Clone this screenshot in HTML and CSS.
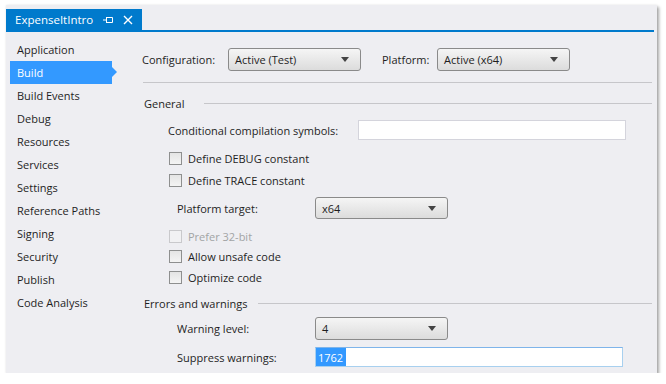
FILE: index.html
```html
<!DOCTYPE html>
<html>
<head>
<meta charset="utf-8">
<link rel="stylesheet" href="styles.css">
</head>
<body>
<div class="frame">
  <div class="tabbar">
    <div class="tab">
      <span class="tab-title">ExpenseItIntro</span>
      <svg class="pin" width="10" height="8" viewBox="0 0 10 8"><path d="M0 4H3M3.5 1V7M3.5 1.5H9.5V6.5H3.5" fill="none" stroke="#fff" stroke-width="1"/></svg>
      <svg class="close" width="10" height="10" viewBox="0 0 10 10"><path d="M1 1L9 9M9 1L1 9" stroke="#fff" stroke-width="1.4"/></svg>
    </div>
  </div>
  <div class="body">
    <ul class="nav">
      <li class="nav-item">Application</li>
      <li class="nav-item active">Build</li>
      <li class="nav-item">Build Events</li>
      <li class="nav-item">Debug</li>
      <li class="nav-item">Resources</li>
      <li class="nav-item">Services</li>
      <li class="nav-item">Settings</li>
      <li class="nav-item">Reference Paths</li>
      <li class="nav-item">Signing</li>
      <li class="nav-item">Security</li>
      <li class="nav-item">Publish</li>
      <li class="nav-item">Code Analysis</li>
    </ul>
    <div class="main">
      <div class="config-row">
        <span class="lbl lbl-config">Configuration:</span>
        <div class="combo combo-config"><span>Active (Test)</span><i class="arrow"></i></div>
        <span class="lbl lbl-platform">Platform:</span>
        <div class="combo combo-config"><span>Active (x64)</span><i class="arrow"></i></div>
      </div>
      <div class="sep"></div>
      <div class="section-head"><span>General</span><i class="line"></i></div>
      <div class="row row-cond">
        <span class="lbl lbl-cond">Conditional compilation symbols:</span>
        <div class="textbox tb-cond"></div>
      </div>
      <div class="check check-debug"><i class="box"></i><span>Define DEBUG constant</span></div>
      <div class="check check-trace"><i class="box"></i><span>Define TRACE constant</span></div>
      <div class="row row-target">
        <span class="lbl lbl-sub">Platform target:</span>
        <div class="combo combo-sub"><span>x64</span><i class="arrow"></i></div>
      </div>
      <div class="check check-prefer disabled"><i class="box"></i><span>Prefer 32-bit</span></div>
      <div class="check check-unsafe"><i class="box"></i><span>Allow unsafe code</span></div>
      <div class="check check-opt"><i class="box"></i><span>Optimize code</span></div>
      <div class="section-head section-errors"><span>Errors and warnings</span><i class="line"></i></div>
      <div class="row row-warn">
        <span class="lbl lbl-sub">Warning level:</span>
        <div class="combo combo-sub"><span>4</span><i class="arrow"></i></div>
      </div>
      <div class="row row-suppress">
        <span class="lbl lbl-sub">Suppress warnings:</span>
        <div class="textbox tb-suppress"><span class="sel">1762</span></div>
      </div>
    </div>
  </div>
</div>
</body>
</html>
```
FILE: styles.css
```css
html, body {
  margin: 0;
  padding: 0;
  background: #ffffff;
}
body {
  font-family: "Segoe UI", "Open Sans", "Noto Sans", sans-serif;
  font-size: 11px;
  color: #1e1e1e;
}
.frame {
  margin: 5px 0 0 6px;
  width: 651px;
  height: 368px;
  background: #eeeef2;
  box-shadow: 2px 2px 3px rgba(0,0,0,0.35), 0 0 2px rgba(0,0,0,0.08);
  display: flex;
  flex-direction: column;
}
.tabbar {
  padding-top: 4px;
  margin-right: 3px;
  border-bottom: 2px solid #007acc;
  display: flex;
}
.tab {
  width: 136px;
  height: 21px;
  background: #007acc;
  color: #fff;
  display: flex;
  align-items: center;
  box-sizing: border-box;
  padding-left: 9px;
}
.tab-title {
  font-size: 11.5px;
  flex: 1;
}
.pin {
  margin-right: 10px;
}
.close {
  margin-right: 9px;
}
.body {
  display: flex;
  flex: 1;
}
.nav {
  list-style: none;
  margin: 0;
  padding: 6px 0 0 4px;
  width: 132px;
}
.nav-item {
  height: 23px;
  line-height: 23px;
  padding-left: 7px;
  width: 102px;
  box-sizing: border-box;
  position: relative;
}
.nav-item.active {
  background: #3399ff;
  color: #fff;
}
.nav-item.active::after {
  content: "";
  position: absolute;
  left: 102px;
  top: 6px;
  border-left: 5px solid #3399ff;
  border-top: 5px solid transparent;
  border-bottom: 5px solid transparent;
}
.main {
  flex: 1;
  padding-top: 16px;
  padding-right: 5px;
}
.config-row {
  display: flex;
  align-items: center;
  height: 23px;
}
.lbl-config {
  width: 86px;
}
.lbl-platform {
  margin-left: 21px;
  width: 55px;
}
.combo {
  height: 23px;
  box-sizing: border-box;
  border: 1px solid #8a8a8a;
  border-radius: 3px;
  background: linear-gradient(#f5f5f5, #dcdcdc);
  display: flex;
  align-items: center;
  padding-left: 6px;
  padding-right: 11px;
}
.combo span {
  flex: 1;
}
.combo-config {
  width: 133px;
}
.arrow {
  width: 0;
  height: 0;
  border-top: 5px solid #444;
  border-left: 4px solid transparent;
  border-right: 4px solid transparent;
}
.sep {
  margin-top: 11px;
  height: 1px;
  background: #c6c6ca;
  margin-left: 1px;
}
.section-head {
  margin-top: 12px;
  height: 16px;
  display: flex;
  align-items: center;
  padding-left: 2px;
}
.section-head .line {
  flex: 1;
  height: 1px;
  background: #c6c6ca;
  margin-left: 20px;
}
.row {
  display: flex;
  align-items: center;
}
.row-cond {
  margin-top: 9px;
  height: 20px;
  padding-left: 26px;
}
.lbl-cond {
  width: 190px;
}
.textbox {
  height: 20px;
  box-sizing: border-box;
  background: #fff;
  border: 1px solid #d4d4dc;
}
.tb-cond {
  width: 268px;
}
.check {
  height: 20px;
  display: flex;
  align-items: center;
  padding-left: 27px;
}
.check .box {
  width: 13px;
  height: 13px;
  box-sizing: border-box;
  border: 1px solid #8e8f8f;
  background: linear-gradient(#e4e4e4, #f4f4f4);
  margin-right: 6px;
}
.check.disabled {
  color: #a2a4a5;
}
.check.disabled .box {
  border-color: #c9c9cc;
  background: #f1f1f3;
}
.check-debug { margin-top: 8px; }
.check-trace { margin-top: 2px; }
.row-target {
  margin-top: 7px;
  height: 22px;
  padding-left: 35px;
}
.lbl-sub {
  width: 138px;
}
.combo-sub {
  width: 133px;
}
.row-target .combo { height: 22px; }
.check-prefer { margin-top: 7px; }
.check-opt { margin-top: 1px; }
.section-errors {
  margin-top: 8px;
}
.section-errors .line {
  margin-left: 11px;
}
.row-warn {
  margin-top: 6px;
  height: 23px;
  padding-left: 35px;
}
.row-suppress {
  margin-top: 7px;
  height: 20px;
  padding-left: 35px;
}
.tb-suppress {
  width: 308px;
  border-color: #a8d0ef;
  border-top-color: #7eb4ea;
  display: flex;
  align-items: stretch;
}
.sel {
  background: #3399ff;
  color: #fff;
  padding: 0 3px 0 2px;
  display: flex;
  align-items: center;
}
```
